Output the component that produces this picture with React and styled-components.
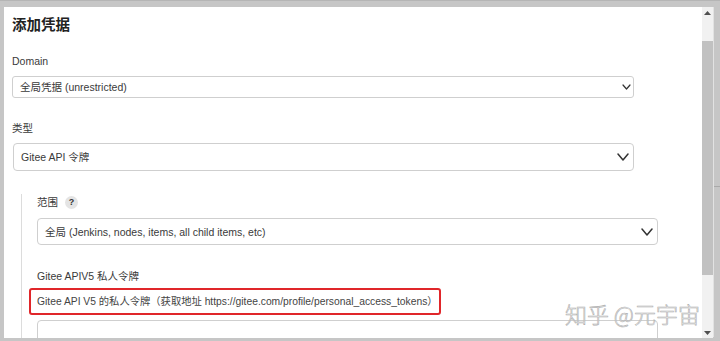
import React from 'react';
import styled, {createGlobalStyle} from "styled-components";

const GlobalStyle = createGlobalStyle`
  html, body {
    margin: 0;
    padding: 0;
    background: #c4c4c4;
  }
  body {
    font-family: "Liberation Sans", "Noto Sans CJK SC", sans-serif;
    color: #333;
  }
  * {
    box-sizing: border-box;
  }
`;

const Chevron = ({size}) => {
    const w = size === 'small' ? 7 : 10;
    const h = size === 'small' ? 4 : 6;
    return (
        <ChevronSvg width={w + 2} height={h + 2} viewBox={`0 0 ${w + 2} ${h + 2}`}>
            <polyline points={`1,1 ${w / 2 + 1},${h + 1} ${w + 1},1`} fill="none" stroke="#333"
                      strokeWidth={size === 'small' ? 1.2 : 1.5} strokeLinecap="round" strokeLinejoin="round"/>
        </ChevronSvg>
    );
};

const Select = ({children, height, width, size, offset}) => (
    <SelectBox $height={height} $width={width} $offset={offset}>
        <SelectText>{children}</SelectText>
        <ArrowSlot $small={size === 'small'}>
            <Chevron size={size}/>
        </ArrowSlot>
    </SelectBox>
);

const App = () => {
    return (
        <>
            <GlobalStyle/>
            <Frame>
                <Window>
                    <Content>
                        <Title>添加凭据</Title>

                        <Label $top={19}>Domain</Label>
                        <Select height={22} width={622} size="small">全局凭据 (unrestricted)</Select>

                        <Label $top={23}>类型</Label>
                        <Select height={28} width={621} offset={1}>Gitee API 令牌</Select>

                        <Section>
                            <LabelRow>
                                <InlineLabel>范围</InlineLabel>
                                <HelpBadge>?</HelpBadge>
                            </LabelRow>
                            <Select height={27} width={621}>全局 (Jenkins, nodes, items, all child items, etc)</Select>

                            <Label $top={24}>Gitee APIV5 私人令牌</Label>
                            <Description>
                                Gitee API V5 的私人令牌（获取地址 https://gitee.com/profile/personal_access_tokens）
                            </Description>
                            <TextArea/>
                        </Section>

                        <Watermark>知乎 @元宇宙</Watermark>
                    </Content>
                    <Scrollbar>
                        <ScrollArrow>
                            <svg width="7" height="4" viewBox="0 0 7 4"><polygon points="0,4 3.5,0 7,4" fill="#505050"/></svg>
                        </ScrollArrow>
                        <Track>
                            <Thumb/>
                        </Track>
                        <ScrollArrow>
                            <svg width="7" height="4" viewBox="0 0 7 4"><polygon points="0,0 3.5,4 7,0" fill="#505050"/></svg>
                        </ScrollArrow>
                    </Scrollbar>
                </Window>
                <SideStrip>
                    <StripLine/>
                </SideStrip>
            </Frame>
        </>
    );
};

const Frame = styled.div`
  height: 341px;
  width: 720px;
  padding: 6px 0 4px 4px;
  display: flex;
  background: #c6c6c6;
  border-top: 1px solid #b5b5b5;
`;

const Window = styled.div`
  flex: 0 0 709px;
  height: 331px;
  display: flex;
  background: #fff;
  overflow: hidden;
`;

const SideStrip = styled.div`
  flex: 1;
  border-left: 1px solid #e2e2e2;
  padding-top: 179px;
`;

const StripLine = styled.div`
  height: 1px;
  background: #a9a9a9;
`;

const Content = styled.div`
  flex: 1;
  position: relative;
  overflow: hidden;
  padding: 8px 0 0 8px;
`;

const Title = styled.h2`
  margin: 0;
  font-size: 14.5px;
  line-height: 20px;
  font-weight: bold;
  color: #222;
`;

const Label = styled.div`
  margin-top: ${p => p.$top}px;
  margin-bottom: 8px;
  font-size: 10.5px;
  line-height: 14px;
  color: #3a3a3a;
`;

const LabelRow = styled.div`
  display: flex;
  align-items: center;
  gap: 7px;
  height: 14px;
  margin-bottom: 9px;
`;

const InlineLabel = styled.span`
  font-size: 10.5px;
  line-height: 14px;
  color: #3a3a3a;
`;

const HelpBadge = styled.span`
  width: 13px;
  height: 13px;
  border-radius: 50%;
  background: #e4e4e4;
  color: #333;
  font-size: 9px;
  font-weight: bold;
  display: flex;
  align-items: center;
  justify-content: center;
  line-height: 1;
`;

const SelectBox = styled.div`
  width: ${p => p.$width}px;
  height: ${p => p.$height}px;
  margin-left: ${p => p.$offset || 0}px;
  border: 1px solid #cfcfcf;
  border-radius: ${p => p.$height > 24 ? 4 : 3}px;
  display: flex;
  align-items: center;
  padding-left: 7px;
  background: #fff;
`;

const SelectText = styled.span`
  flex: 1;
  font-size: 10.5px;
  line-height: 14px;
  color: #3a3a3a;
  white-space: nowrap;
`;

const ArrowSlot = styled.span`
  width: ${p => p.$small ? 14 : 20}px;
  display: flex;
  justify-content: center;
  align-items: center;
`;

const ChevronSvg = styled.svg`
  display: block;
`;

const Section = styled.div`
  margin-top: 23px;
  margin-left: 9px;
  padding: 1px 0 0 15px;
  border-left: 1px solid #dcdcdc;
  min-height: 200px;
`;

const Description = styled.div`
  display: inline-block;
  margin: -7px 0 0 -8px;
  height: 27px;
  width: 412px;
  padding: 0 6px;
  border: 2px solid #e0262a;
  border-radius: 3px;
  font-size: 10.3px;
  line-height: 23px;
  color: #444;
  white-space: nowrap;
`;

const TextArea = styled.div`
  margin-top: 5px;
  width: 621px;
  height: 80px;
  border: 1px solid #cfcfcf;
  border-radius: 4px;
`;

const Watermark = styled.div`
  position: absolute;
  left: 561px;
  top: 294px;
  font-size: 22px;
  line-height: 24px;
  color: rgba(255, 255, 255, 0.75);
  -webkit-text-stroke: 0.6px #acacac;
  white-space: nowrap;
  font-family: "Noto Sans CJK SC", sans-serif;
  font-weight: 300;
`;

const Scrollbar = styled.div`
  flex: 0 0 11px;
  display: flex;
  flex-direction: column;
  background: #f1f1f1;
`;

const ScrollArrow = styled.div`
  height: 11px;
  display: flex;
  align-items: center;
  justify-content: center;
`;

const Track = styled.div`
  flex: 1;
  display: flex;
  flex-direction: column;
  padding: 23px 0 52px;
`;

const Thumb = styled.div`
  flex: 1;
  background: #c1c1c1;
`;

export default App;
